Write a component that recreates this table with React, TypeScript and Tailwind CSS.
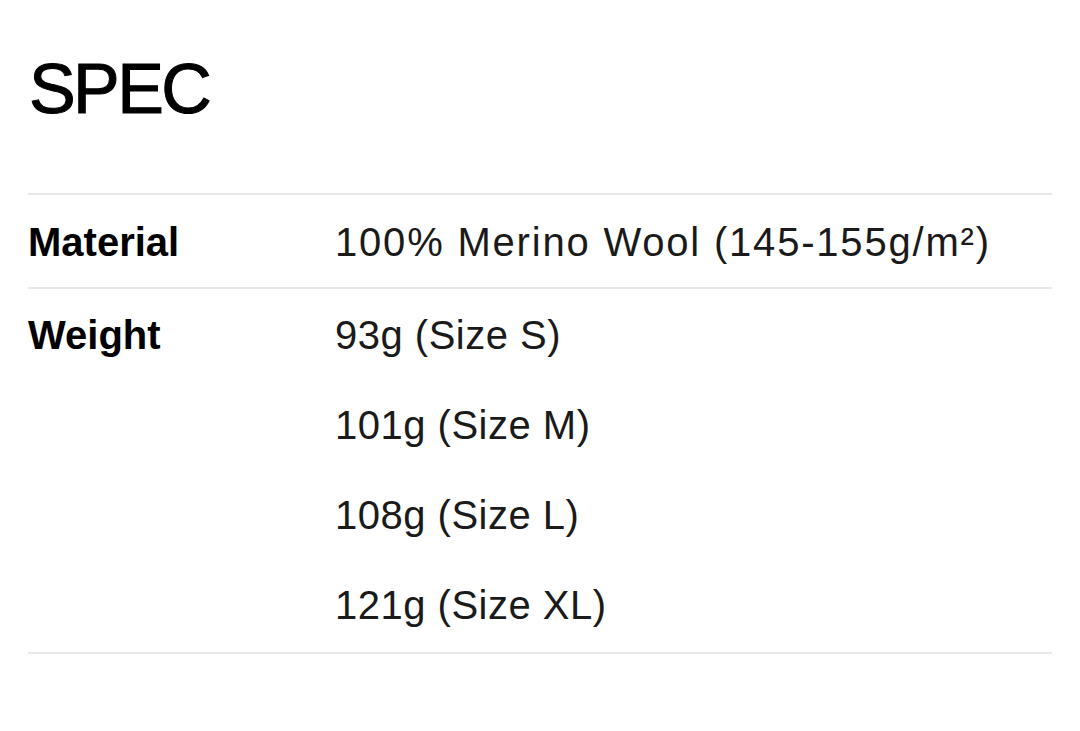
import React from "react";

const weights = ["93g (Size S)", "101g (Size M)", "108g (Size L)", "121g (Size XL)"];

export default function App() {
  return (
    <div className="min-h-screen bg-white px-[28px] pt-[54px] text-black font-['Liberation_Sans',Arial,sans-serif]">
      <h1 className="text-[70px] leading-none tracking-[-2.6px] font-normal pl-[1px] [-webkit-text-stroke:1px_#000]">
        SPEC
      </h1>

      <div className="mt-[69px] border-t-2 border-[#e8e8e8]">
        {/* Material */}
        <div className="flex border-b-2 border-[#e8e8e8] pt-[27px] pb-[25px]">
          <div className="w-[307px] shrink-0 text-[40px] leading-[40px] font-bold">Material</div>
          <div className="text-[40px] leading-[40px] tracking-[1.8px] text-[#1a1a1a]">
            100% Merino Wool (145-155g/m²)
          </div>
        </div>

        {/* Weight */}
        <div className="flex border-b-2 border-[#e8e8e8] pt-[26px] pb-[27px]">
          <div className="w-[307px] shrink-0 text-[40px] leading-[40px] font-bold">Weight</div>
          <div className="flex flex-col gap-[50px] text-[40px] leading-[40px] tracking-[0.5px] text-[#1a1a1a]">
            {weights.map((w) => (
              <div key={w}>{w}</div>
            ))}
          </div>
        </div>
      </div>
    </div>
  );
}
